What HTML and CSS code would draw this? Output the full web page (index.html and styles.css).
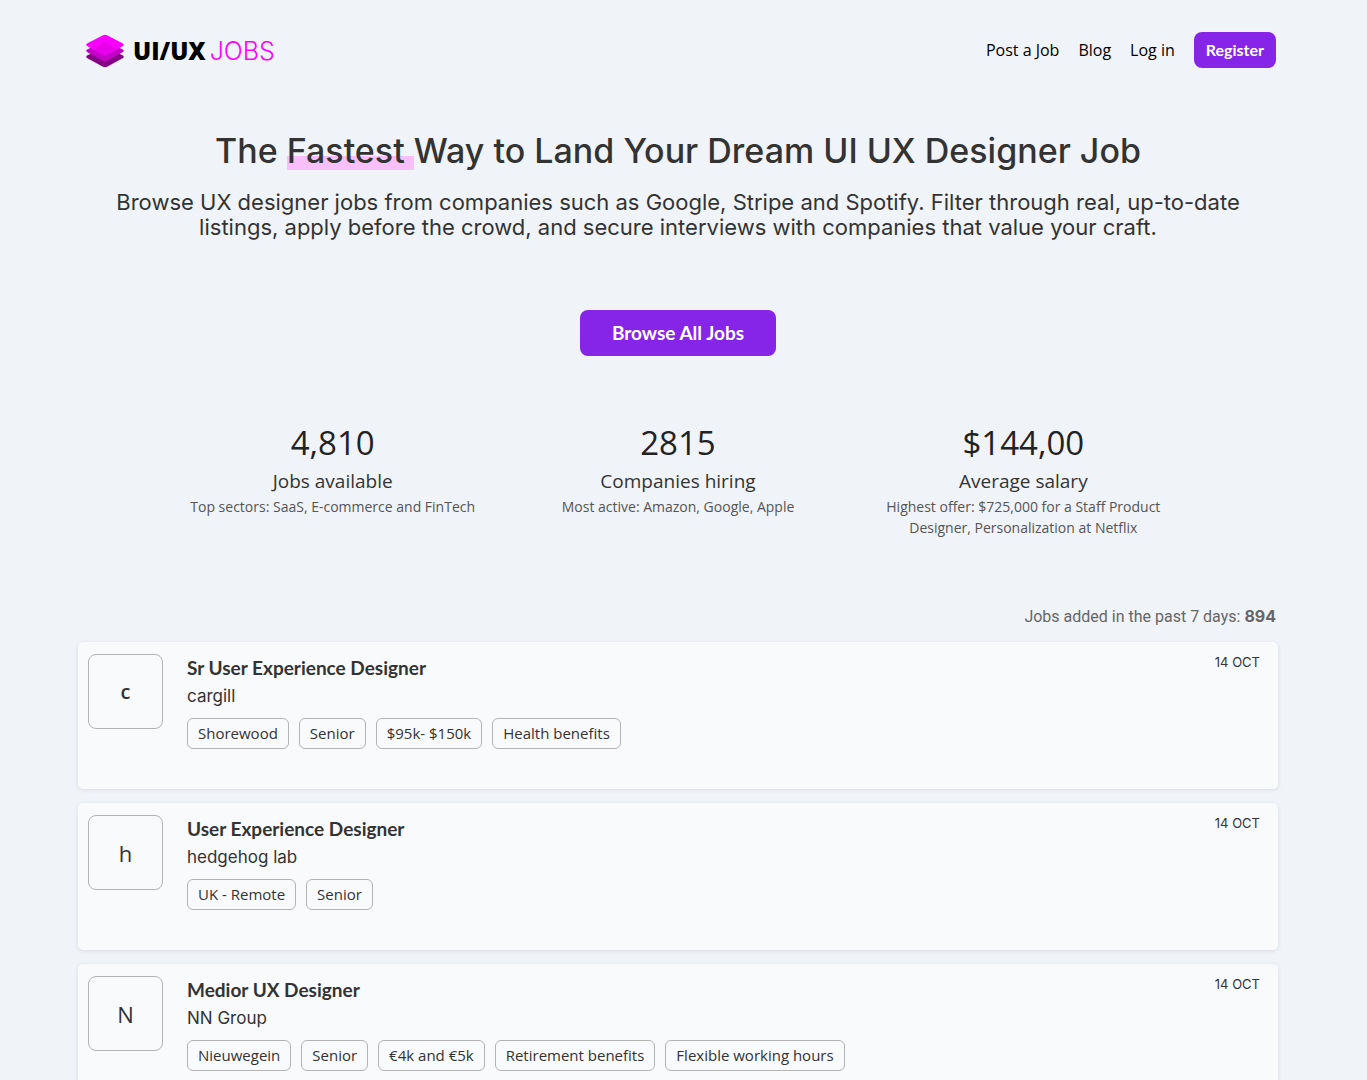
FILE: index.html
```html
<!DOCTYPE html>
<html lang="en">
<head>
    <meta charset="UTF-8">
    <meta name="viewport" content="width=device-width, initial-scale=1.0">
    <title>UI/UX Jobs</title>
    <link rel="stylesheet" href="styles.css">
</head>
<body>
    <div class="container">
        <header class="header">
            <a href="#" class="logo">
                <svg width="40" height="34" viewBox="0 0 40 34">
                    <path fill="#850085" d="M2 21.500 17.500 14.500q2.500-1 5 0L38 21.500q1.800 1.200 0 2.500L22.500 32.400q-2.500 1.300-5 0L2 24q-1.800-1.300 0-2.500z"/>
                    <path fill="#c400c8" d="M2 15.500 17.500 8.500q2.500-1 5 0L38 15.500q1.800 1.200 0 2.500L22.500 26.600q-2.500 1.300-5 0L2 18q-1.800-1.300 0-2.500z"/>
                    <path fill="#f800fb" d="M2 9.500 17.500 1.500q2.500-1.300 5 0L38 9.500q1.800 1.200 0 2.500L22.500 20.400q-2.500 1.300-5 0L2 12q-1.800-1.300 0-2.500z"/>
                    <path fill="#e600ec" d="M8.500 15.400 17.500 9q2.500-1.400 5 0l9 6.400-9 5q-2.500 1.300-5 0z"/>
                </svg>
                <span class="logo-text"><b>UI/UX</b> <span>JOBS</span></span>
            </a>
            <nav class="nav">
                <a href="#">Post a Job</a>
                <a href="#">Blog</a>
                <a href="#">Log in</a>
                <button type="button" class="button button-small">Register</button>
            </nav>
        </header>

        <section class="hero">
            <h1 class="title">The <span class="highlight">Fastest </span>Way to Land Your Dream UI UX Designer Job</h1>
            <p class="subtitle">Browse UX designer jobs from companies such as Google, Stripe and Spotify. Filter through real, up-to-date listings, apply before the crowd, and secure interviews with companies that value your craft.</p>
            <button type="button" class="button button-large">Browse All Jobs</button>
        </section>

        <section class="stats">
            <div class="stat">
                <div class="stat-value">4,810</div>
                <div class="stat-label">Jobs available</div>
                <p class="stat-note">Top sectors: SaaS, E-commerce and FinTech</p>
            </div>
            <div class="stat">
                <div class="stat-value">2815</div>
                <div class="stat-label">Companies hiring</div>
                <p class="stat-note">Most active: Amazon, Google, Apple</p>
            </div>
            <div class="stat">
                <div class="stat-value">$144,00</div>
                <div class="stat-label">Average salary</div>
                <p class="stat-note">Highest offer: $725,000 for a Staff Product Designer, Personalization at Netflix</p>
            </div>
        </section>

        <p class="added">Jobs added in the past 7 days: <b>894</b></p>

        <main class="jobs">
            <article class="job">
                <div class="job-logo job-logo-small">c</div>
                <div class="job-body">
                    <h2 class="job-title">Sr User Experience Designer</h2>
                    <div class="job-company">cargill</div>
                    <ul class="tags">
                        <li>Shorewood</li>
                        <li>Senior</li>
                        <li>$95k- $150k</li>
                        <li>Health benefits</li>
                    </ul>
                </div>
                <time class="job-date">14 OCT</time>
            </article>
            <article class="job">
                <div class="job-logo">h</div>
                <div class="job-body">
                    <h2 class="job-title">User Experience Designer</h2>
                    <div class="job-company">hedgehog lab</div>
                    <ul class="tags">
                        <li>UK - Remote</li>
                        <li>Senior</li>
                    </ul>
                </div>
                <time class="job-date">14 OCT</time>
            </article>
            <article class="job">
                <div class="job-logo">N</div>
                <div class="job-body">
                    <h2 class="job-title">Medior UX Designer</h2>
                    <div class="job-company">NN Group</div>
                    <ul class="tags">
                        <li>Nieuwegein</li>
                        <li>Senior</li>
                        <li>€4k and €5k</li>
                        <li>Retirement benefits</li>
                        <li>Flexible working hours</li>
                    </ul>
                </div>
                <time class="job-date">14 OCT</time>
            </article>
        </main>
    </div>
</body>
</html>
```
FILE: styles.css
```css
:root {
    --primary: #8624e8;
    --background: #f0f3f8;
    --card: #f9fafc;
    --text: #333333;
    --muted: #555555;
    --border: #b3b3b3;
    --pink: #ff00ff;
    --highlight: #f9bffb;
    --font-wide: Inter, sans-serif;
    --font-soft: "Open Sans", sans-serif;
    --font-button: Lato, sans-serif;
}

* {
    margin: 0;
    padding: 0;
    box-sizing: border-box;
}

body {
    background-color: var(--background);
    color: var(--text);
    font-family: var(--font-wide);
    padding-right: 11px;
}

/* Layout */
.container {
    max-width: 1200px;
    margin: 0 auto;
}

.header {
    display: flex;
    justify-content: space-between;
    align-items: flex-start;
    padding: 32px 2px 0 7px;
}

.logo {
    display: flex;
    align-items: center;
    gap: 8px;
    padding-top: 1px;
    text-decoration: none;
    color: var(--pink);
}

.logo-text {
    display: flex;
    align-items: baseline;
    gap: 4px;
    font-size: 25px;
    font-weight: 300;
    line-height: 36px;
}

.logo-text b {
    font-family: var(--font-soft);
    font-weight: 800;
    font-size: 24px;
    color: #000000;
}

.nav {
    display: flex;
    align-items: center;
    gap: 19px;
    font-family: var(--font-soft);
    font-size: 16px;
}

.nav a {
    color: #000000;
    text-decoration: none;
}

/* Buttons */
.button {
    border: none;
    border-radius: 8px;
    background: var(--primary);
    color: #ffffff;
    font-family: var(--font-button);
    font-weight: 700;
    cursor: pointer;
}

.button-small {
    height: 36px;
    padding: 0 12px 2px;
    font-size: 16px;
}

.button-large {
    height: 46px;
    padding: 0 32px 2px;
    font-size: 19px;
}

/* Hero */
.hero {
    text-align: center;
    padding: 59px 32px 0;
}

.title {
    font-size: 34px;
    font-weight: 500;
    line-height: 46px;
}

.highlight {
    background: linear-gradient(var(--highlight), var(--highlight)) 0 26px / 100% 14px no-repeat;
}

.subtitle {
    font-size: 22px;
    line-height: 25px;
    margin: 16px 0 70px;
}

/* Stats */
.stats {
    display: grid;
    grid-template-columns: repeat(3, 1fr);
    padding: 64px 82px 0;
    font-family: var(--font-soft);
    text-align: center;
}

.stat {
    padding: 0 24px;
}

.stat-value {
    font-size: 33px;
    line-height: 46px;
    color: #222222;
}

.stat-label {
    font-size: 19px;
    line-height: 30px;
}

.stat-note {
    font-size: 14px;
    line-height: 21px;
    color: var(--muted);
}

.added {
    margin: 69px 2px 16px;
    font-family: Roboto, sans-serif;
    font-size: 16px;
    line-height: 19px;
    text-align: right;
    color: #666666;
}

.added b {
    font-family: var(--font-wide);
}

/* Job list */
.jobs {
    display: grid;
    gap: 14px;
}

.job {
    display: flex;
    align-items: flex-start;
    gap: 24px;
    min-height: 147px;
    padding: 12px 18px 40px 10px;
    border-radius: 5px;
    background: var(--card);
    box-shadow: 0 1px 4px rgba(0, 0, 0, 0.1);
}

.job-logo {
    flex: none;
    display: flex;
    align-items: center;
    justify-content: center;
    width: 75px;
    height: 75px;
    border: 1px solid var(--border);
    border-radius: 8px;
    font-family: var(--font-soft);
    font-size: 22px;
}

.job-logo-small {
    font-size: 20px;
    font-weight: 600;
}

.job-body {
    flex: 1;
}

.job-title {
    font-family: var(--font-button);
    font-size: 19px;
    font-weight: 700;
    line-height: 27px;
}

.job-company {
    font-size: 17px;
    line-height: 30px;
}

.tags {
    display: flex;
    flex-wrap: wrap;
    gap: 10px;
    margin-top: 7px;
    list-style: none;
}

.tags li {
    border: 1px solid var(--border);
    border-radius: 6px;
    padding: 0 10px;
    font-family: var(--font-soft);
    font-size: 15px;
    font-weight: 500;
    line-height: 29px;
}

.job-date {
    font-size: 13px;
    line-height: 17px;
}

@media (max-width: 768px) {
    .container {
        padding: 0 16px;
    }

    .stats {
        grid-template-columns: 1fr;
        gap: 24px;
        padding: 48px 0 0;
    }
}
```
